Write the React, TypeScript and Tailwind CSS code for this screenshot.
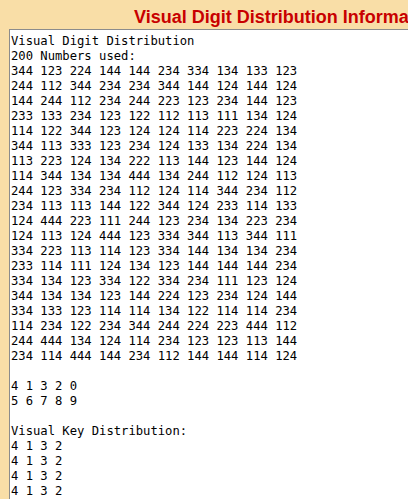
const rows = [
  '344 123 224 144 144 234 334 134 133 123',
  '244 112 344 234 234 344 144 124 144 124',
  '144 244 112 234 244 223 123 234 144 123',
  '233 133 234 123 122 112 113 111 134 124',
  '114 122 344 123 124 124 114 223 224 134',
  '344 113 333 123 234 124 133 134 224 134',
  '113 223 124 134 222 113 144 123 144 124',
  '114 344 134 134 444 134 244 112 124 113',
  '244 123 334 234 112 124 114 344 234 112',
  '234 113 113 144 122 344 124 233 114 133',
  '124 444 223 111 244 123 234 134 223 234',
  '124 113 124 444 123 334 344 113 344 111',
  '334 223 113 114 123 334 144 134 134 234',
  '233 114 111 124 134 123 144 144 144 234',
  '334 134 123 334 122 334 234 111 123 124',
  '344 134 134 123 144 224 123 234 124 144',
  '334 133 123 114 114 134 122 114 114 234',
  '114 234 122 234 344 244 224 223 444 112',
  '244 444 134 124 114 234 123 123 113 144',
  '234 114 444 144 234 112 144 144 114 124',
];

const output = [
  'Visual Digit Distribution',
  '200 Numbers used:',
  ...rows,
  '',
  '4 1 3 2 0',
  '5 6 7 8 9',
  '',
  'Visual Key Distribution:',
  '4 1 3 2',
  '4 1 3 2',
  '4 1 3 2',
  '4 1 3 2',
  '4 1 3 2',
].join('\n');

export default function App() {
  return (
    <div className="h-[499px] w-[408px] overflow-hidden bg-[#f9dea7]">
      {/* title, runs off the right edge */}
      <div className="h-[29px] pt-[7px] pl-[134px] whitespace-nowrap">
        <h1 className="text-[18px] leading-[20px] font-bold text-[#c80000] font-['Liberation_Sans',Arial,sans-serif]">
          Visual Digit Distribution Information
        </h1>
      </div>

      {/* output box */}
      <div className="ml-[9px] w-[420px] h-[520px] bg-white border-t border-l border-[#8c8c8c]">
        <pre className="pl-[1px] pt-[4px] text-[12.2px] leading-[15px] text-black font-['DejaVu_Sans_Mono',monospace] whitespace-pre">
          {output}
        </pre>
      </div>
    </div>
  );
}
